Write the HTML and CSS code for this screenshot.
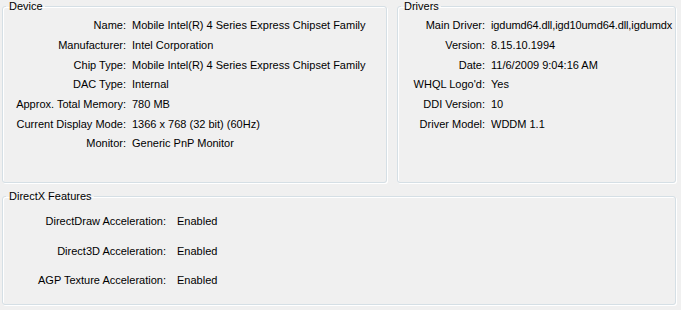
FILE: index.html
```html
<!DOCTYPE html>
<html lang="en">
<head>
  <meta charset="UTF-8" />
  <title>Display</title>
  <link rel="stylesheet" href="styles.css">
</head>
<body>
  <div class="top">
    <fieldset class="group device">
      <legend>Device</legend>
      <div class="rows">
        <span class="label">Name:</span><span class="value">Mobile Intel(R) 4 Series Express Chipset Family</span>
        <span class="label">Manufacturer:</span><span class="value">Intel Corporation</span>
        <span class="label">Chip Type:</span><span class="value">Mobile Intel(R) 4 Series Express Chipset Family</span>
        <span class="label">DAC Type:</span><span class="value">Internal</span>
        <span class="label">Approx. Total Memory:</span><span class="value">780 MB</span>
        <span class="label">Current Display Mode:</span><span class="value">1366 x 768 (32 bit) (60Hz)</span>
        <span class="label">Monitor:</span><span class="value">Generic PnP Monitor</span>
      </div>
    </fieldset>

    <fieldset class="group drivers">
      <legend>Drivers</legend>
      <div class="rows">
        <span class="label">Main Driver:</span><span class="value clip">igdumd64.dll,igd10umd64.dll,igdumdx</span>
        <span class="label">Version:</span><span class="value">8.15.10.1994</span>
        <span class="label">Date:</span><span class="value">11/6/2009 9:04:16 AM</span>
        <span class="label">WHQL Logo'd:</span><span class="value">Yes</span>
        <span class="label">DDI Version:</span><span class="value">10</span>
        <span class="label">Driver Model:</span><span class="value">WDDM 1.1</span>
      </div>
    </fieldset>
  </div>

  <fieldset class="group features">
    <legend>DirectX Features</legend>
    <div class="rows">
      <span class="label">DirectDraw Acceleration:</span><span class="value">Enabled</span>
      <span class="label">Direct3D Acceleration:</span><span class="value">Enabled</span>
      <span class="label">AGP Texture Acceleration:</span><span class="value">Enabled</span>
    </div>
  </fieldset>
</body>
</html>
```

FILE: styles.css
```css
* {
  box-sizing: border-box;
}
body {
  margin: 0;
  padding: 0 5px 0 2px;
  background: #f0f0f0;
  color: #000;
  font-family: 'Liberation Sans', Arial, sans-serif;
  font-size: 11px;
  line-height: 13px;
  width: 681px;
  height: 310px;
  overflow: hidden;
}
.top {
  display: flex;
  gap: 10px;
}
.group {
  margin: 0;
  padding: 0;
  min-width: 0;
  border: 1px solid #d5dfe5;
  border-radius: 3px;
  box-shadow: inset 1px 1px 0 #fff, 1px 1px 0 #fff;
}
.group legend {
  margin-left: 3px;
  padding: 0 2px 0 3px;
}
.device {
  width: 385px;
  height: 183px;
}
.drivers {
  flex: 1;
  height: 183px;
}
.features {
  margin-top: 7px;
  height: 115px;
}
.rows {
  display: grid;
  column-gap: 6px;
  grid-auto-rows: 19.7px;
  align-items: center;
  padding-top: 3px;
}
.label {
  text-align: right;
  white-space: nowrap;
}
.value {
  white-space: nowrap;
  overflow: hidden;
}
.value.clip {
  letter-spacing: -0.1px;
}
.device .rows {
  grid-template-columns: 123px 1fr;
}
.drivers .rows {
  grid-template-columns: 87px 1fr;
}
.features .rows {
  grid-template-columns: 163px 1fr;
  column-gap: 11px;
  grid-auto-rows: 29.5px;
  padding-top: 4px;
}
```
